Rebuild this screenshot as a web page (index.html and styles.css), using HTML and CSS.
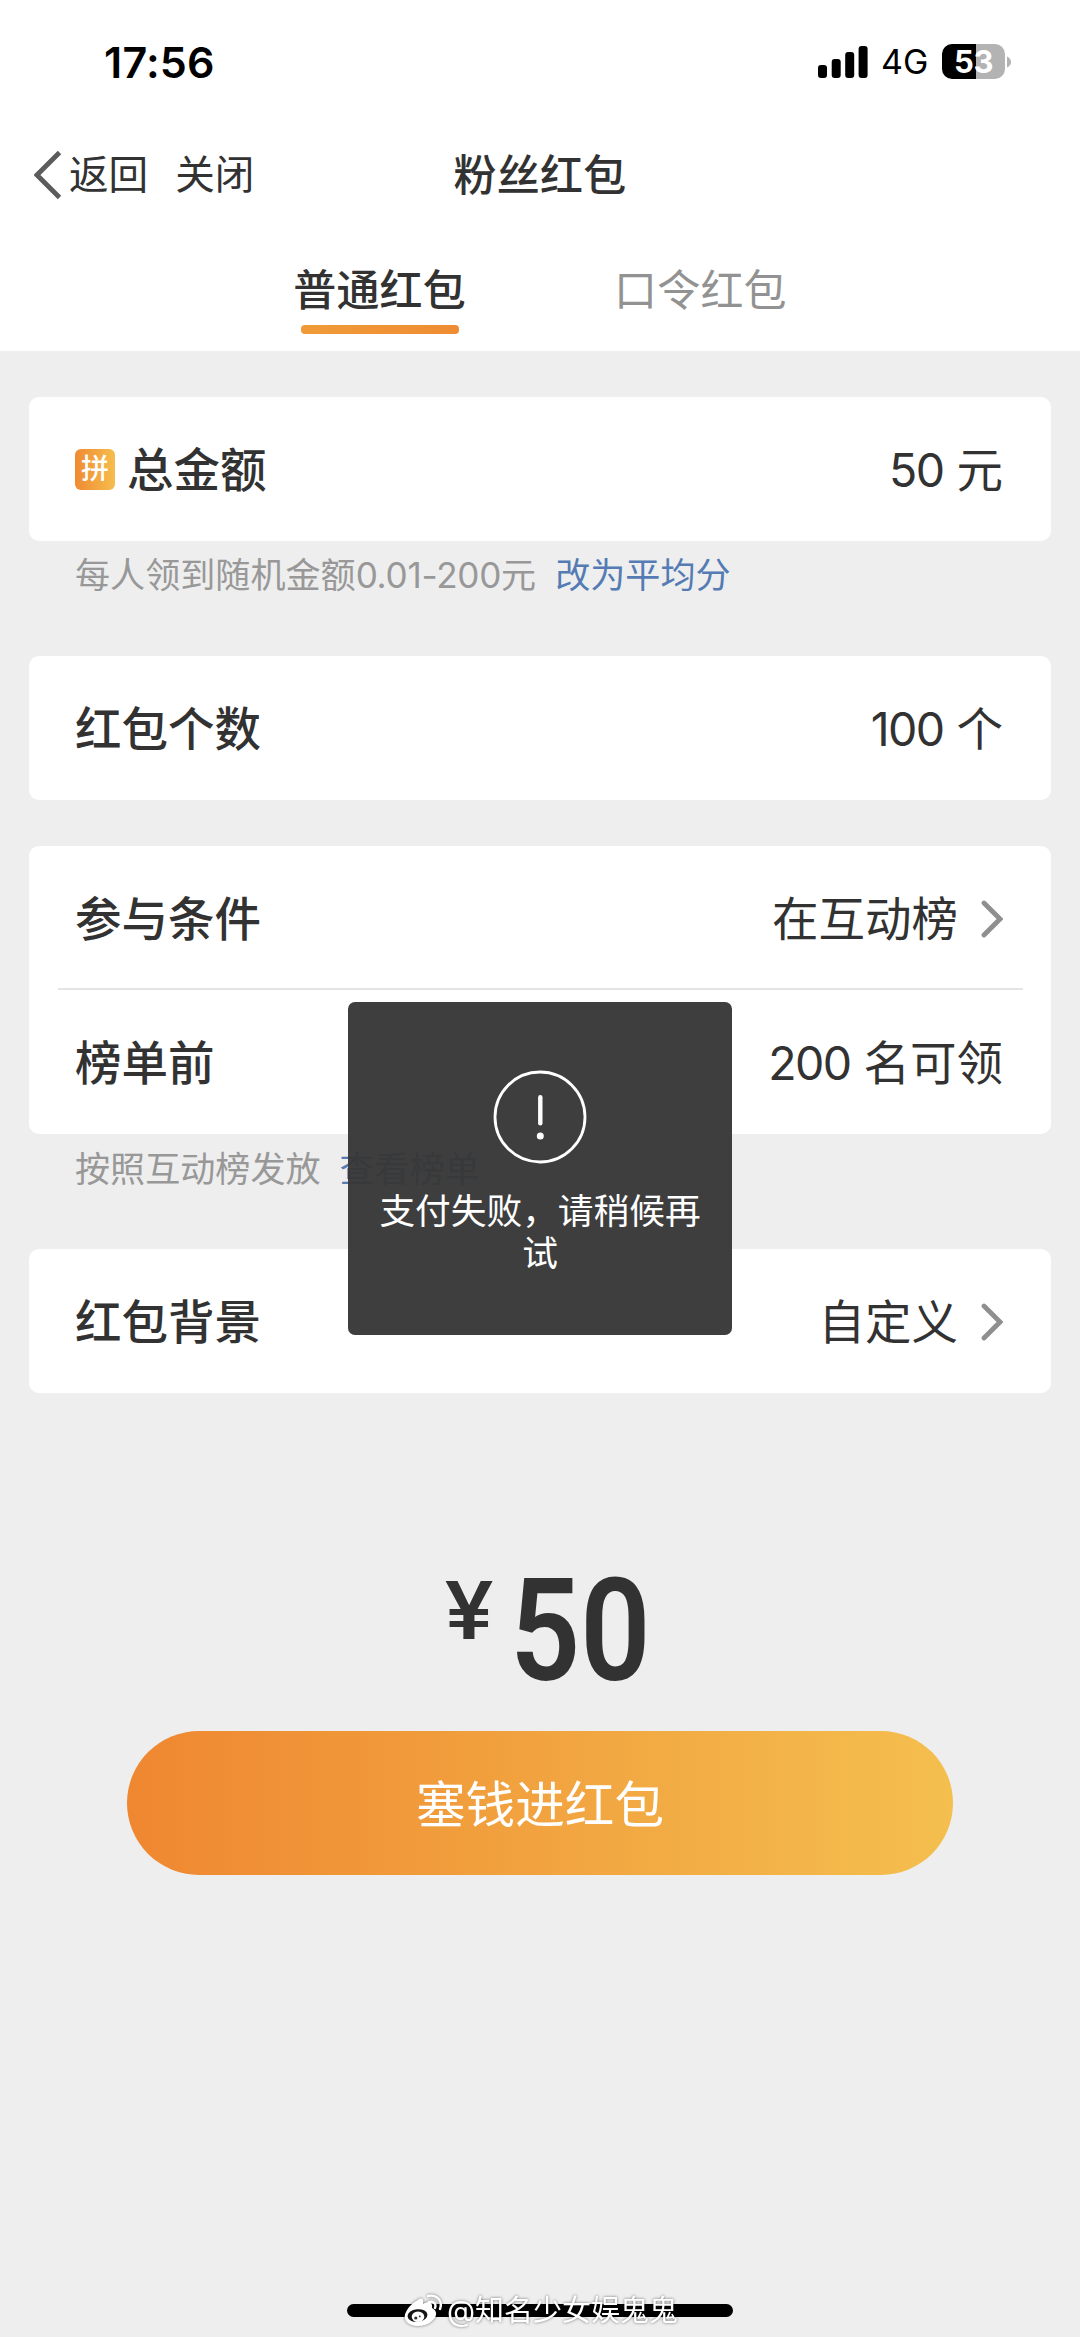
FILE: index.html
```html
<!DOCTYPE html>
<html lang="zh-CN">
<head>
<meta charset="utf-8">
<title>粉丝红包</title>
<link rel="stylesheet" href="styles.css">
</head>
<body>
<header class="header">
  <div class="status">
    <span class="time">17:56</span>
    <div class="status-right">
      <svg class="signal" width="50" height="32" viewBox="0 0 50 32"><rect x="0" y="19" width="9" height="13" rx="3"/><rect x="13.7" y="13" width="9" height="19" rx="3"/><rect x="27.2" y="6" width="9" height="26" rx="3"/><rect x="40.6" y="0" width="9" height="32" rx="3"/></svg>
      <span class="network">4G</span>
      <span class="battery">53</span>
      <svg class="nub" width="4" height="12" viewBox="0 0 4 12"><path d="M0 0.5Q4 2.5 4 6T0 11.5Z" fill="#b3b3b3"/></svg>
    </div>
  </div>
  <nav class="nav">
    <div class="nav-left">
      <svg width="28" height="50" viewBox="0 0 28 50"><path d="M25.5 2.5 3 25 25.5 47.5" fill="none" stroke="#5c5c5c" stroke-width="4.8"/></svg>
      <span class="back">返回</span>
      <span>关闭</span>
    </div>
    <h1 class="title">粉丝红包</h1>
  </nav>
  <div class="tabs">
    <span class="tab active">普通红包</span>
    <span class="tab">口令红包</span>
  </div>
</header>

<main class="form">
  <section class="card">
    <div class="row">
      <span class="label"><i class="pin">拼</i>总金额</span>
      <span class="value"><span class="num">50</span> 元</span>
    </div>
  </section>
  <p class="hint"><span>每人领到随机金额<span class="range">0.01-200</span>元</span><a class="link">改为平均分</a></p>

  <section class="card">
    <div class="row">
      <span class="label">红包个数</span>
      <span class="value"><span class="num">100</span> 个</span>
    </div>
  </section>

  <section class="card conditions">
    <div class="row">
      <span class="label">参与条件</span>
      <span class="value">在互动榜<svg class="chevron" width="22" height="38" viewBox="0 0 22 38"><path d="M3 3 19 19 3 35"/></svg></span>
    </div>
    <hr class="divider">
    <div class="row">
      <span class="label">榜单前</span>
      <span class="value"><span class="num">200</span> 名可领</span>
    </div>
  </section>
  <p class="hint rank"><span>按照互动榜发放</span><a class="link">查看榜单</a></p>

  <section class="card">
    <div class="row">
      <span class="label">红包背景</span>
      <span class="value">自定义<svg class="chevron" width="22" height="38" viewBox="0 0 22 38"><path d="M3 3 19 19 3 35"/></svg></span>
    </div>
  </section>

  <div class="price"><span class="yen">¥</span><span class="sum">50</span></div>
  <button class="submit">塞钱进红包</button>
</main>

<div class="toast">
  <svg width="94" height="94" viewBox="0 0 94 94"><circle cx="47" cy="47" r="45" fill="none" stroke="#fff" stroke-width="2.8"/><path d="M47.3 27.2V53.2" fill="none" stroke="#fff" stroke-width="4.4" stroke-linecap="round"/><circle cx="47.3" cy="66" r="3.5" fill="#fff"/></svg>
  <p class="message">支付失败，请稍候再<br>试</p>
</div>

<div class="home-bar"></div>
<div class="watermark">
  <svg width="40" height="34" viewBox="0 0 40 34">
    <path d="M15 6C19 3 21 5 20 10C25 7 30 8 29 14C35 17 34 23 29 27C22 34 5 34 2 25C0 19 8 9 15 6Z" fill="#fff"/>
    <ellipse cx="14.5" cy="21.5" rx="10" ry="6.3" fill="#161616" transform="rotate(-6 14.5 21.5)"/>
    <ellipse cx="15" cy="22.8" rx="6.3" ry="5.2" fill="#fff"/>
    <circle cx="12.8" cy="24" r="1.6" fill="#333"/><circle cx="16.8" cy="22.4" r=".9" fill="#333"/>
    <path d="M25 2C34 0 40 7 37 15M26 8C31 7 33.500 10 32 14" fill="none" stroke="#fff" stroke-width="2.4" stroke-linecap="round"/>
  </svg>
  <span>@知名少女娱鬼鬼</span>
</div>
</body>
</html>
```
FILE: styles.css
```css
* { box-sizing: border-box; }

body {
  position: relative;
  margin: 0;
  width: 1080px;
  height: 2337px;
  overflow: hidden;
  background: #eeeeee;
  color: #323232;
  font-family: Inter, "Noto Sans CJK SC", sans-serif;
}

.header { height: 351px; background: #fff; }

.status {
  display: flex;
  justify-content: space-between;
  align-items: center;
  height: 123px;
  padding: 0 69px 0 104px;
  color: #000;
}
.time { font-size: 43px; font-weight: 600; letter-spacing: .2px; }
.status-right { display: flex; align-items: center; }
.network { box-sizing: content-box; width: 48px; margin-right: 13px; padding-left: 13px; font-size: 34px; line-height: 40px; white-space: nowrap; }
.battery {
  width: 63px;
  height: 35px;
  border-radius: 10px;
  background: linear-gradient(90deg, #000 34px, #b3b3b3 34px);
  color: #fff;
  font-size: 31px;
  font-weight: 700;
  line-height: 35px;
  text-align: center;
  letter-spacing: -0.5px;
}
.nub { margin-left: 2px; }

.nav {
  display: grid;
  grid-template-columns: 1fr auto 1fr;
  align-items: center;
  height: 103px;
  font-size: 39.6px;
}
.nav-left { display: flex; align-items: center; padding-left: 34px; }
.nav-left span { line-height: 60px; }
.back { padding-left: 7px; margin-right: 27px; }
.title { margin: 0; font-size: 43px; line-height: 60px; font-weight: 500; letter-spacing: .3px; }

.tabs { display: flex; justify-content: center; gap: 148px; padding: 29px 0 0; }
.tab { display: flex; flex-direction: column; align-items: center; font-size: 43px; line-height: 70px; letter-spacing: .2px; color: #929292; }
.tab.active { color: #323232; font-weight: 500; }
.tab.active::after {
  content: "";
  width: 158px;
  height: 9px;
  border-radius: 4px;
  background: linear-gradient(90deg, #f09b38, #ef8c33);
}

.form { display: flex; flex-direction: column; padding: 46px 29px 0; }
.card { background: #fff; border-radius: 10px; }
.row { display: flex; justify-content: space-between; align-items: center; height: 144px; padding: 1px 48px 0 46px; font-size: 46.5px; line-height: 70px; }
.label { display: flex; align-items: center; font-weight: 500; }
.pin {
  width: 40px;
  height: 41px;
  margin-right: 12px;
  border-radius: 6px;
  background: linear-gradient(90deg, #ef8b32, #f5bd4d);
  color: #fff;
  font-size: 28px;
  font-style: normal;
  line-height: 41px;
  text-align: center;
}
.value { display: flex; align-items: center; white-space: pre; }
.num { letter-spacing: -1.6px; }
.chevron { margin: 0 0 0 23px; fill: none; stroke: #8f8f8f; stroke-width: 4.8; stroke-linecap: round; }

.hint { height: 115px; margin: 0; padding: 9px 46px 0; font-size: 35.1px; line-height: 50px; color: #989898; }
.range { letter-spacing: -.25px; }
.link { margin-left: 19px; color: #547bb4; }

.conditions { margin-top: 46px; }
.divider { width: 965px; height: 2px; margin: -2px auto 0; border: 0; background: #e4e4e4; }
.rank { padding-top: 10px; }

.price { display: flex; align-items: flex-start; height: 338px; padding: 158px 0 0 416px; }
.yen { width: 52px; font-family: Roboto, sans-serif; font-size: 81px; font-weight: 500; line-height: 122px; transform: scaleX(1.12); transform-origin: 0 0; }
.sum { margin-left: 13px; font-family: Roboto, sans-serif; font-size: 143px; font-weight: 600; line-height: 160px; transform: scaleX(.86); transform-origin: 0 0; }

.submit {
  align-self: center;
  width: 826px;
  height: 144px;
  padding: 0 0 5px;
  border: 0;
  border-radius: 72px;
  background: linear-gradient(90deg, #ef8731, #f4bf4e);
  color: #fff;
  font: inherit;
  font-size: 49.6px;
}

.toast {
  position: absolute;
  left: 348px;
  top: 1002px;
  display: flex;
  flex-direction: column;
  align-items: center;
  width: 384px;
  height: 333px;
  padding-top: 68px;
  border-radius: 7px;
  background: rgba(54, 54, 54, .96);
  color: #fff;
}
.message { margin: 26px 0 0; font-size: 35.7px; line-height: 42px; text-align: center; white-space: nowrap; }

.home-bar { position: absolute; left: 347px; top: 2304px; width: 386px; height: 13px; border-radius: 7px; background: #000; }
.watermark {
  position: absolute;
  left: 403px;
  top: 2291px;
  display: flex;
  align-items: center;
  gap: 4px;
  color: #fff;
  font-size: 29px;
  line-height: 40px;
  white-space: nowrap;
  filter: drop-shadow(0 0 1.5px rgba(0, 0, 0, .55));
}
```
